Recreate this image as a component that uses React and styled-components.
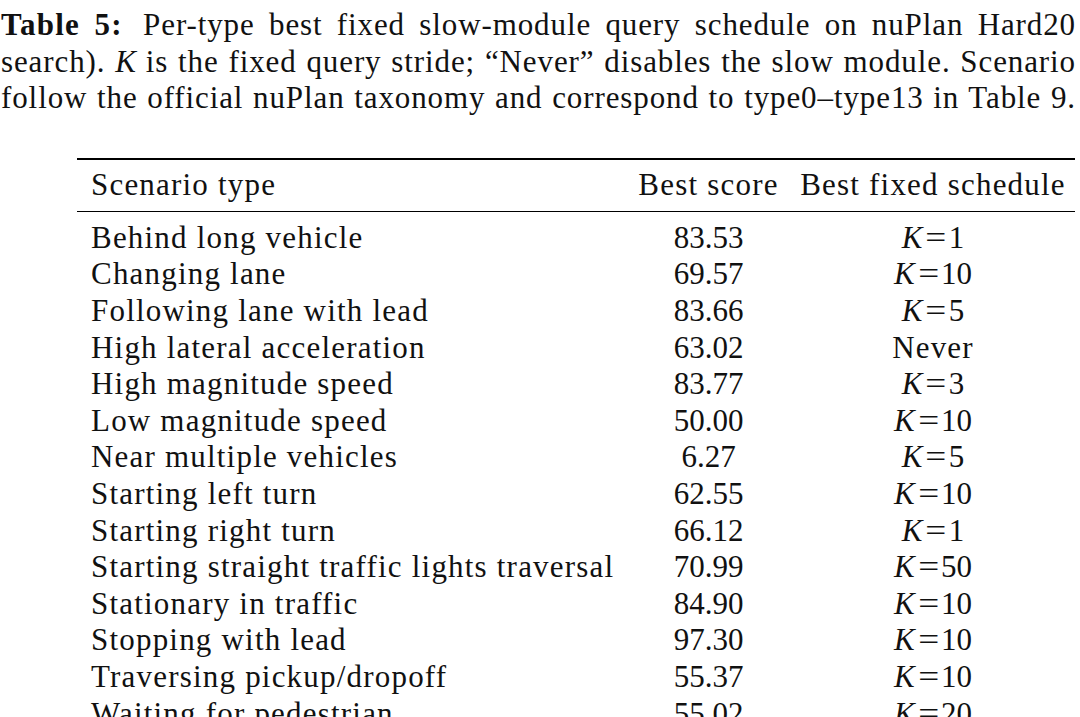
import React from "react";
import styled, { createGlobalStyle } from "styled-components";

const Global = createGlobalStyle`
  html, body {
    margin: 0;
    padding: 0;
    background: #ffffff;
    overflow: hidden;
  }
  body {
    font-family: "Liberation Serif", "Times New Roman", serif;
    color: #111111;
  }
`;

const Page = styled.div`
  width: 1080px;
  height: 717px;
  overflow: hidden;
  padding-top: 7px;
  box-sizing: border-box;
  font-family: "Liberation Serif", "Times New Roman", serif;
  font-size: 31px;
  line-height: 36.6px;
  color: #111111;
`;

const Caption = styled.div`
  width: 1076px;
  padding-left: 1px;
  box-sizing: border-box;
`;

const CaptionLine = styled.div`
  text-align: justify;
  text-align-last: justify;
  letter-spacing: 0.9px;
`;

const Label = styled.b`
  font-weight: 700;
  letter-spacing: 1.2px;
  margin-right: 6px;
`;

const Table = styled.div`
  margin-top: 41px;
  margin-left: 77px;
  width: 998px;
  display: flex;
  flex-direction: column;
`;

const Row = styled.div`
  display: grid;
  grid-template-columns: 549px 165px 284px;
  ${(p) =>
    p.$head &&
    `
    border-top: 2px solid #000;
    border-bottom: 1.5px solid #000;
    padding: 7px 0 7.5px;
    margin-bottom: 8px;
  `}
`;

const Cell = styled.div`
  white-space: nowrap;
  text-align: ${(p) => p.$align || "left"};
  padding: ${(p) => (p.$align === "left" || !p.$align ? "0 0 0 14px" : "0")};
  letter-spacing: ${(p) => (p.$text ? "1.2px" : "0")};
`;

const Var = styled.i`
  font-style: italic;
  letter-spacing: 0;
`;

const Eq = styled.span`
  display: inline-block;
  margin: 0 4px 0 5px;
  transform: scaleX(1.2);
`;

const rows = [
  ["Behind long vehicle", "83.53", "1"],
  ["Changing lane", "69.57", "10"],
  ["Following lane with lead", "83.66", "5"],
  ["High lateral acceleration", "63.02", null],
  ["High magnitude speed", "83.77", "3"],
  ["Low magnitude speed", "50.00", "10"],
  ["Near multiple vehicles", "6.27", "5"],
  ["Starting left turn", "62.55", "10"],
  ["Starting right turn", "66.12", "1"],
  ["Starting straight traffic lights traversal", "70.99", "50"],
  ["Stationary in traffic", "84.90", "10"],
  ["Stopping with lead", "97.30", "10"],
  ["Traversing pickup/dropoff", "55.37", "10"],
  ["Waiting for pedestrian", "55.02", "20"],
];

export default function App() {
  return (
    <>
      <Global />
      <Page>
        <Caption>
          <CaptionLine>
            <Label>Table 5:</Label> Per-type best fixed slow-module query schedule on nuPlan Hard20
          </CaptionLine>
          <CaptionLine>
            search). <Var>K</Var> is the fixed query stride; “Never” disables the slow module. Scenario
          </CaptionLine>
          <CaptionLine>
            follow the official nuPlan taxonomy and correspond to type0–type13 in Table 9.
          </CaptionLine>
        </Caption>
        <Table>
          <Row $head>
            <Cell $text>Scenario type</Cell>
            <Cell $align="center" $text>Best score</Cell>
            <Cell $align="center" $text>Best fixed schedule</Cell>
          </Row>
          {rows.map(([name, score, k]) => (
            <Row key={name}>
              <Cell $text>{name}</Cell>
              <Cell $align="center">{score}</Cell>
              <Cell $align="center" $text={!k}>
                {k ? (
                  <>
                    <Var>K</Var>
                    <Eq>=</Eq>
                    {k}
                  </>
                ) : (
                  "Never"
                )}
              </Cell>
            </Row>
          ))}
        </Table>
      </Page>
    </>
  );
}
